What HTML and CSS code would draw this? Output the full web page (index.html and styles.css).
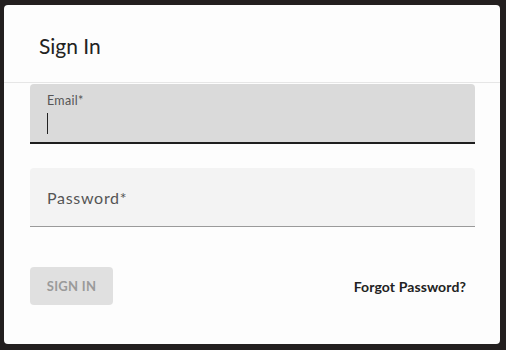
FILE: index.html
```html
<!DOCTYPE html>
<html>
<head>
<meta charset="utf-8">
<link rel="stylesheet" href="styles.css">
</head>
<body>
<div class="dialog">
  <div class="dialog-header">
    <h1 class="dialog-title">Sign In</h1>
  </div>
  <div class="dialog-body">
    <div class="field field-focused">
      <label class="field-label-small">Email*</label>
      <span class="caret"></span>
    </div>
    <div class="field field-idle">
      <label class="field-label">Password*</label>
    </div>
    <div class="actions">
      <button class="btn-signin" disabled>SIGN IN</button>
      <a class="forgot">Forgot Password?</a>
    </div>
  </div>
</div>
</body>
</html>
```
FILE: styles.css
```css
html, body {
  margin: 0;
  padding: 0;
  background: #231f1f;
  font-family: Lato, "Liberation Sans", sans-serif;
}
.dialog {
  margin: 5px 6px 6px 4px;
  width: 496px;
  height: 339px;
  background: #fdfdfd;
  border-radius: 4px;
  overflow: hidden;
  display: flex;
  flex-direction: column;
}
.dialog-header {
  height: 78px;
  border-bottom: 1px solid #e6e6e6;
  display: flex;
  align-items: center;
  padding-left: 35px;
  box-sizing: border-box;
  flex: none;
}
.dialog-title {
  margin: 0;
  font-size: 21px;
  font-weight: 400;
  color: #222;
  padding-top: 4px;
}
.dialog-body {
  padding: 1px 25px 0 26px;
  display: flex;
  flex-direction: column;
}
.field {
  height: 58px;
  border-radius: 4px 4px 0 0;
  box-sizing: content-box;
  position: relative;
  padding-left: 17px;
}
.field-focused {
  background: #dadada;
  border-bottom: 2px solid #1e1e1e;
  display: flex;
  flex-direction: column;
}
.field-idle {
  margin-top: 24px;
  background: #f3f3f3;
  border-bottom: 1px solid #9a9a9a;
  display: flex;
  align-items: center;
}
.field-label-small {
  font-size: 12.5px;
  color: #555;
  margin-top: 9px;
  letter-spacing: 0.3px;
}
.caret {
  display: block;
  width: 1px;
  height: 21px;
  background: #222;
  margin-top: 5px;
}
.field-label {
  font-size: 16px;
  color: #555;
  letter-spacing: 0.7px;
  padding-top: 1px;
}
.actions {
  margin-top: 40px;
  display: flex;
  justify-content: space-between;
  align-items: center;
}
.btn-signin {
  width: 83px;
  height: 38px;
  border: none;
  border-radius: 4px;
  background: #e0e0e0;
  color: #9a9a9a;
  font-family: Lato, "Liberation Sans", sans-serif;
  font-weight: 700;
  font-size: 13px;
  letter-spacing: 0.3px;
  padding: 0;
}
.forgot {
  font-size: 14px;
  font-weight: 700;
  color: #222;
  padding-right: 9px;
  letter-spacing: 0.1px;
}
```
